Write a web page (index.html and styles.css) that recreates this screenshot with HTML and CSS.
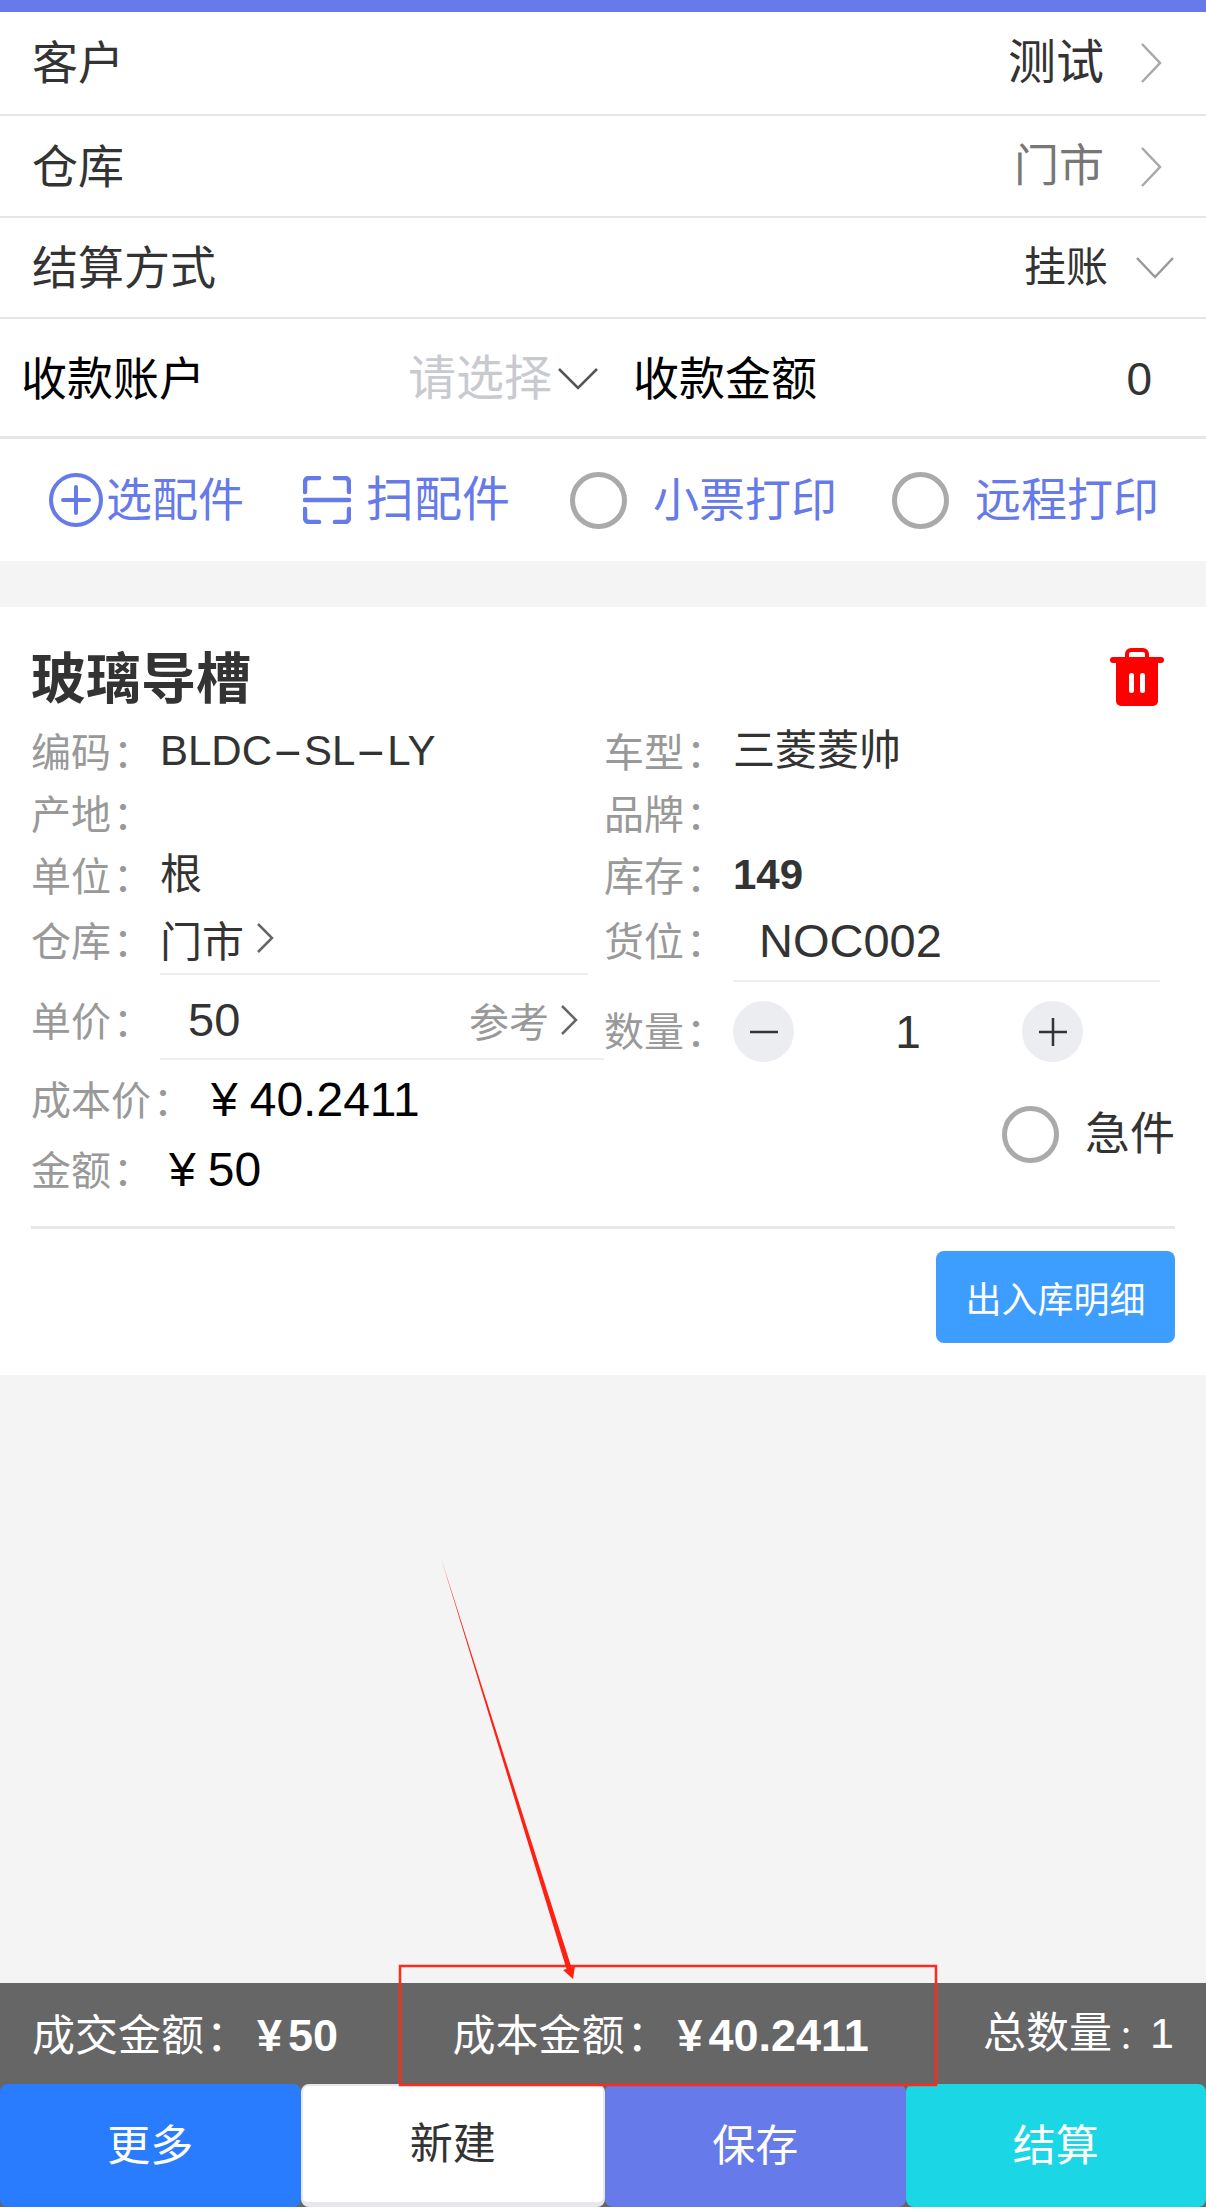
FILE: index.html
```html
<!DOCTYPE html>
<html lang="zh-CN">
<head>
<meta charset="utf-8">
<title>销售开单</title>
<link rel="stylesheet" href="styles.css">
</head>
<body>
<div class="page">
  <div class="topbar"></div>

  <section class="form">
    <div class="row row-a">
      <span class="row-label">客户</span>
      <span class="row-end"><span class="v-customer">测试</span>
        <svg class="chev-r" viewBox="0 0 22 40"><path d="M2 1l18 19L2 39"/></svg></span>
    </div>
    <div class="row row-b">
      <span class="row-label">仓库</span>
      <span class="row-end"><span class="v-store">门市</span>
        <svg class="chev-r" viewBox="0 0 22 40"><path d="M2 1l18 19L2 39"/></svg></span>
    </div>
    <div class="row row-c">
      <span class="row-label">结算方式</span>
      <span class="row-end"><span class="v-pay">挂账</span>
        <svg class="chev-d" viewBox="0 0 38 22"><path d="M1 1l18 19L37 1"/></svg></span>
    </div>
    <div class="row row-d">
      <span class="acct-label">收款账户</span>
      <span class="acct-select">请选择</span>
      <svg class="chev-acct" viewBox="0 0 40 22"><path d="M1 1l19 19L39 1"/></svg>
      <span class="acct-label2">收款金额</span>
      <span class="acct-value">0</span>
    </div>
  </section>

  <section class="tools">
    <span class="tool tool-pick">
      <svg class="ic-plus" viewBox="0 0 54 54"><circle cx="27" cy="27" r="25"/><path d="M14 27h26M27 14v26"/></svg>
      <span>选配件</span>
    </span>
    <span class="tool tool-scan">
      <svg class="ic-scan" viewBox="0 0 48 48"><path d="M2 16V6a4 4 0 0 1 4-4h10M32 2h10a4 4 0 0 1 4 4v10M2 24h44M2 33v9a4 4 0 0 0 4 4h10M32 46h10a4 4 0 0 0 4-4v-9"/></svg>
      <span>扫配件</span>
    </span>
    <span class="tool tool-ticket"><span class="radio"></span><span>小票打印</span></span>
    <span class="tool tool-remote"><span class="radio"></span><span>远程打印</span></span>
  </section>

  <main class="content">
    <article class="card">
      <header class="card-head">
        <h1 class="card-title">玻璃导槽</h1>
        <svg class="ic-trash" viewBox="0 0 54 58"><path class="tr-handle" d="M17 10V6a4 4 0 0 1 4-4h12a4 4 0 0 1 4 4v4"/><rect y="9" width="54" height="6" rx="3"/><path d="M6 14h42v39a5 5 0 0 1-5 5H11a5 5 0 0 1-5-5z"/><rect class="tr-slot" x="19" y="25" width="5" height="20" rx="2.5"/><rect class="tr-slot" x="30" y="25" width="5" height="20" rx="2.5"/></svg>
      </header>

      <div class="cols">
        <div class="col col-left">
          <div class="field"><span class="label">编码<span class="colon">：</span></span><span class="value">BLDC<span class="hy">-</span>SL<span class="hy">-</span>LY</span></div>
          <div class="field"><span class="label">产地<span class="colon">：</span></span></div>
          <div class="field"><span class="label">单位<span class="colon">：</span></span><span class="value">根</span></div>
          <div class="field field-store"><span class="label">仓库<span class="colon">：</span></span>
            <span class="input input-store">门市<svg class="chev-s" viewBox="0 0 17 30"><path d="M1 1l14 14L1 29"/></svg></span></div>
          <div class="field field-price"><span class="label">单价<span class="colon">：</span></span>
            <span class="input input-price"><span class="price">50</span><span class="ref">参考<svg class="chev-s" viewBox="0 0 17 30"><path d="M1 1l14 14L1 29"/></svg></span></span></div>
        </div>
        <div class="col col-right">
          <div class="field"><span class="label">车型<span class="colon">：</span></span><span class="value">三菱菱帅</span></div>
          <div class="field"><span class="label">品牌<span class="colon">：</span></span></div>
          <div class="field"><span class="label">库存<span class="colon">：</span></span><span class="value value-bold">149</span></div>
          <div class="field field-loc"><span class="label">货位<span class="colon">：</span></span><span class="input input-loc">NOC002</span></div>
          <div class="field field-qty"><span class="label">数量<span class="colon">：</span></span>
            <span class="stepper">
              <span class="step"><svg viewBox="0 0 30 30"><path d="M1 15h28"/></svg></span>
              <span class="qty">1</span>
              <span class="step"><svg viewBox="0 0 30 30"><path d="M1 15h28M15 1v28"/></svg></span>
            </span></div>
        </div>
      </div>

      <div class="money">
        <div class="money-list">
          <div class="money-row"><span class="label-free">成本价<span class="colon">：</span></span><span class="money-val money-val-cost"><span class="yen">¥</span>40.2411</span></div>
          <div class="money-row"><span class="label-free">金额<span class="colon">：</span></span><span class="money-val"><span class="yen">¥</span>50</span></div>
        </div>
        <div class="urgent"><span class="radio"></span><span>急件</span></div>
      </div>

      <div class="card-foot"><button class="detail-btn">出入库明细</button></div>
    </article>
  </main>

  <footer class="summary">
    <span class="sum-item">成交金额<span class="colon">：</span><b class="sum-val"><span class="yen">¥</span>50</b></span>
    <span class="sum-item">成本金额<span class="colon">：</span><b class="sum-val"><span class="yen">¥</span>40.2411</b></span>
    <span class="sum-item sum-total">总数量<span class="colon">：</span>1</span>
  </footer>
  <nav class="actions">
    <button class="act act-more">更多</button>
    <button class="act act-new">新建</button>
    <button class="act act-save">保存</button>
    <button class="act act-pay">结算</button>
  </nav>
  <div class="page-end"></div>

  <svg class="annotation" viewBox="0 0 1206 2211">
    <rect class="an-box" x="400" y="1966" width="536" height="119"/>
    <path class="an-arrow" d="M441 1558L571.500 1967.500L575 1966L573 1979L563 1970L566.500 1969z"/>
  </svg>
</div>
</body>
</html>
```

FILE: styles.css
```css
* { box-sizing: border-box; }
html, body { margin: 0; padding: 0; }
body {
  font-family: "Liberation Sans", "Noto Sans CJK SC", sans-serif;
  color: #333;
  background: #fff;
}
.page {
  position: relative;
  width: 1206px;
  height: 2211px;
  display: flex;
  flex-direction: column;
  background: #f4f4f4;
  overflow: hidden;
}
.topbar { height: 12px; background: #667ae9; flex: none; }

/* form rows */
.form { background: #fff; flex: none; }
.row {
  display: flex;
  align-items: center;
  justify-content: space-between;
  padding: 0 44px 0 32px;
  border-bottom: 2px solid #e6e6e6;
}
.row-a { height: 104px; padding-bottom: 1px; }
.row-b { height: 102px; padding-top: 1px; }
.row-c { height: 101px; }
.row-d {
  height: 120px;
  padding: 2px 0 0 21px;
  border-bottom-width: 3px;
  justify-content: flex-start;
}
.row-label { font-size: 46px; line-height: 60px; }
.row-end { display: flex; align-items: center; }
.v-customer { font-size: 48px; line-height: 60px; }
.v-store { font-size: 45px; line-height: 60px; color: #777; }
.v-pay { font-size: 42px; line-height: 60px; }
.chev-r, .chev-d, .chev-acct, .chev-s { fill: none; stroke-width: 2.5; }
.chev-r { width: 22px; height: 40px; margin-left: 36px; stroke: #a8a8a8; }
.chev-d { width: 38px; height: 22px; margin-left: 28px; margin-right: -1px; stroke: #999; }
.row-c .row-end { margin-right: -11px; }
.acct-label, .acct-label2 { font-size: 46px; color: #000; line-height: 60px; }
.acct-select { font-size: 48px; color: #c8cad0; line-height: 60px; margin-left: 203px; }
.chev-acct { width: 40px; height: 22px; margin-left: 6px; stroke: #555; }
.acct-label2 { margin-left: 35px; }
.acct-value { font-size: 46px; margin-left: auto; margin-right: 54px; line-height: 60px; }

/* tool strip */
.tools {
  flex: none;
  height: 122px;
  background: #fff;
  display: flex;
  align-items: center;
  color: #667ae9;
  font-size: 46px;
  padding-left: 49px;
}
.tool { display: flex; align-items: center; line-height: 60px; }
.ic-plus { width: 54px; height: 54px; margin-right: 3px; fill: none; stroke: #667ae9; stroke-width: 4; stroke-linecap: round; }
.ic-scan { width: 48px; height: 48px; margin-right: 15px; fill: none; stroke: #667ae9; stroke-width: 4.500; stroke-linecap: round; }
.tool-scan { margin-left: 59px; font-size: 48px; }
.tool-ticket { margin-left: 60px; }
.tool-remote { margin-left: 55px; }
.radio {
  display: block;
  width: 57px;
  height: 57px;
  border-radius: 50%;
  border: 5px solid #aaa;
  flex: none;
}
.tool .radio { margin-right: 26px; }

/* card */
.content { flex: 1; padding-top: 46px; min-height: 0; }
.card { background: #fff; padding: 40px 31px 31px; height: 768px; }
.card-head { display: flex; justify-content: space-between; align-items: center; height: 64px; margin-bottom: 9px; }
.card-title { margin: 0; font-size: 55px; line-height: 64px; font-weight: 700; }
.ic-trash { width: 54px; height: 58px; margin-right: 11px; margin-top: -4px; fill: #f00; }
.tr-handle { fill: none; stroke: #f00; stroke-width: 4; }
.tr-slot { fill: #fff; }

.cols { display: flex; }
.col-left { width: 573px; flex: none; }
.col-right { flex: 1; }
.field { display: flex; align-items: center; height: 62px; font-size: 42px; }
.label { width: 129px; flex: none; font-size: 40px; line-height: 60px; color: #999; white-space: nowrap; }
.colon { font-family: "Noto Sans CJK TC", sans-serif; margin-left: 2px; margin-right: -14px; }
.value { line-height: 60px; white-space: nowrap; }
.value-bold { font-weight: 700; }
.hy { display: inline-block; width: .76em; text-align: center; transform: scaleX(2.2); }

.field-store, .field-loc { height: auto; padding-top: 3px; align-items: flex-start; }
.input { display: flex; align-items: center; height: 66px; border-bottom: 2px solid #eee; flex: 1; }
.input-store { margin-right: 16px; padding-bottom: 6px; }
.input-loc { height: 73px; padding-left: 26px; padding-bottom: 8px; margin-right: 15px; font-size: 47px; }
.chev-s { width: 17px; height: 30px; margin-left: 13px; stroke: #666; }
.field-price { height: 72px; margin-top: 13px; }
.field-price .label { margin-bottom: 8px; }
.input-price { height: 72px; justify-content: space-between; padding: 0 26px 7px 28px; }
.price { font-size: 47px; }
.ref { display: flex; align-items: center; color: #999; font-size: 40px; }
.ref .chev-s { margin-left: 12px; }
.field-qty { height: 61px; margin-top: 19px; }
.field-qty .label { margin-bottom: 3px; }
.stepper { display: flex; align-items: center; justify-content: space-between; width: 350px; }
.step { width: 61px; height: 61px; border-radius: 50%; background: #ebedf0; display: flex; align-items: center; justify-content: center; }
.step svg { width: 30px; height: 30px; fill: none; stroke: #333; stroke-width: 2.500; }
.qty { font-size: 46px; }

.money { display: flex; justify-content: space-between; align-items: center; padding-top: 4px; height: 167px; padding-bottom: 23px; border-bottom: 3px solid #e8e8e8; }
.money-row { display: flex; align-items: center; height: 70px; color: #000; }
.label-free { font-size: 40px; color: #999; line-height: 60px; white-space: nowrap; }
.money-val { font-size: 48px; line-height: 60px; margin-left: 30px; }
.money-val-cost { margin-left: 32px; }
.yen { margin-right: 12px; }
.urgent { display: flex; align-items: center; font-size: 45px; line-height: 60px; }
.urgent .radio { margin-right: 26px; }

.card-foot { display: flex; justify-content: flex-end; margin-top: 22px; }
.detail-btn {
  width: 239px;
  height: 92px;
  border: 0;
  padding: 0;
  border-radius: 8px;
  background: #3d9eff;
  color: #fff;
  font: 36px "Liberation Sans", "Noto Sans CJK SC", sans-serif;
}

/* bottom */
.summary {
  flex: none;
  height: 101px;
  background: #666;
  color: #fff;
  font-size: 43px;
  display: flex;
  align-items: center;
  justify-content: space-between;
  padding: 0 32px;
}
.sum-item { white-space: nowrap; line-height: 60px; }
.sum-val { font-weight: 700; font-size: 45px; margin-left: 22px; }
.sum-val .yen { margin-right: 6px; }
.sum-total .colon { font-size: 32px; margin-left: 6px; margin-right: 0; }
.actions { flex: none; height: 123px; display: flex; background: #666; }
.act {
  flex: 1;
  border: 0;
  padding: 0 0 8px;
  border-radius: 8px;
  color: #fff;
  font: 43px "Liberation Sans", "Noto Sans CJK SC", sans-serif;
}
.act-more { background: #2a7cff; }
.act-new { background: #fff; color: #333; border: 2px solid #e8e8ec; border-bottom-width: 5px; }
.act-save { background: #667ae9; }
.act-pay { background: #1bd7e6; }
.page-end { flex: none; height: 4px; background: #fff; }

/* annotation drawn over the screenshot */
.annotation { position: absolute; left: 0; top: 0; width: 1206px; height: 2211px; pointer-events: none; }
.an-box { fill: none; stroke: #ff2a1a; stroke-width: 2.500; }
.an-arrow { fill: #ff2012; }
```
